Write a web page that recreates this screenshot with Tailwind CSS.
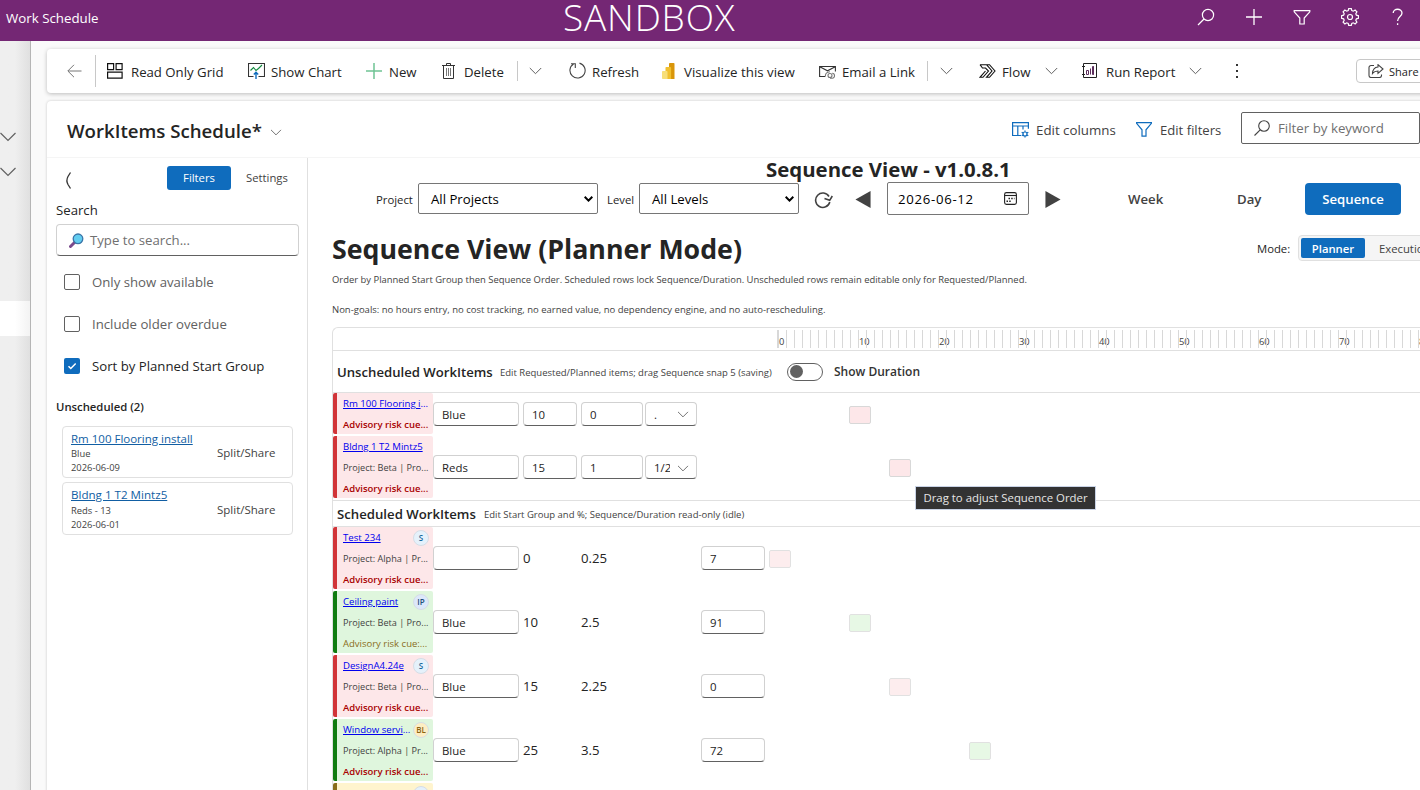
<!DOCTYPE html>
<html lang="en">
<head>
    <meta charset="UTF-8">
    <meta name="viewport" content="width=device-width, initial-scale=1.0">
    <title>Work Schedule</title>
    <script src="https://cdn.jsdelivr.net/npm/@tailwindcss/browser@4"></script>
</head>
<body class="w-[1420px] h-[790px] overflow-hidden bg-[#fafafa] font-['Open_Sans','Noto_Sans',sans-serif] text-[13.2px] text-[#242424] whitespace-nowrap">
    <!-- top bar -->
    <header class="h-[41px] bg-[#742774] text-white grid grid-cols-[563px_1fr_auto]">
        <div class="pl-[6px] pt-[8px] leading-5 text-[13.3px]">Work Schedule</div>
        <div class="text-[37px] leading-[34px] font-light tracking-[0.85px]">SANDBOX</div>
        <div class="flex gap-7 pt-[7px] pr-[12px]">
            <svg class="size-5" viewBox="0 0 20 20" fill="none" stroke="currentColor" stroke-width="1.2"><circle cx="12" cy="8" r="5.6"/><path d="M8 12l-6 6"/></svg>
            <svg class="size-5" viewBox="0 0 20 20" fill="none" stroke="currentColor" stroke-width="1.3"><path d="M10 2v16M2 10h16"/></svg>
            <svg class="size-5" viewBox="0 0 20 20" fill="none" stroke="currentColor" stroke-width="1.2"><path d="M2.2 3.6h15.6v1.2l-5.6 6.2v6H7.8v-6L2.2 4.8z"/></svg>
            <svg class="size-5" viewBox="0 0 20 20" fill="none" stroke="currentColor" stroke-width="1.2"><path d="M8.7 2.3h2.6l.5 2 1.5.6 1.8-1.1 1.8 1.8-1.1 1.8.6 1.5 2 .5v2.6l-2 .5-.6 1.5 1.1 1.8-1.8 1.8-1.8-1.1-1.5.6-.5 2H8.7l-.5-2-1.5-.6-1.8 1.1-1.8-1.8 1.1-1.8-.6-1.5-2-.5V9.4l2-.5.6-1.5-1.1-1.8 1.8-1.8 1.8 1.1 1.5-.6z" transform="translate(0 -.7)"/><circle cx="10" cy="10" r="2.5"/></svg>
            <svg class="size-5" viewBox="0 0 20 20" fill="none" stroke="currentColor" stroke-width="1.3"><path d="M5.2 6c0-5 8.8-5 8.8 0 0 3.5-4.4 3.5-4.4 8M9.6 16.2v1.7"/></svg>
        </div>
    </header>

    <div class="flex h-[749px] overflow-hidden">
        <!-- collapsed navigation -->
        <aside class="w-[31px] shrink-0 border-r border-[#b5b5b5] bg-linear-to-r from-[#efefef] from-50% to-[#e0e0e0] text-[#616161]">
            <svg class="w-[17px] h-[10px] mt-[91px]" viewBox="0 0 17 10" fill="none" stroke="currentColor" stroke-width="1.2"><path d="M.5 1l7.5 7.5L15.5 1"/></svg>
            <svg class="w-[17px] h-[10px] mt-[25px]" viewBox="0 0 17 10" fill="none" stroke="currentColor" stroke-width="1.2"><path d="M.5 1l7.5 7.5L15.5 1"/></svg>
            <div class="mt-[124px] h-[35px] bg-linear-to-r from-white from-50% to-[#f3f3f3]"></div>
        </aside>

        <main class="w-[1389px] h-[749px] pl-4 pt-2 overflow-hidden">
            <!-- command bar -->
            <div class="flex items-center h-[44px] w-[1400px] rounded bg-white shadow-[0_1px_4px_rgba(0,0,0,0.25)]">
                <div class="w-[49px] h-8 border-r border-[#c8c8c8] flex items-center pl-[20px]">
                    <svg class="w-[15px] h-[14px]" viewBox="0 0 15 14" fill="none" stroke="#767676"><path d="M7 .8L.8 7 7 13.2M1 7h13.5"/></svg>
                </div>
                <div class="flex items-center w-[140px] pl-[11px] gap-2">
                    <svg class="size-4" viewBox="0 0 16 16" fill="none" stroke="#111" stroke-width="1.2"><path d="M.6.6h6v6h-6zM9.1.6h6v6h-6zM.6 9.1h14.5v6H.6z"/></svg>
                    <span class="pt-[3px]">Read Only Grid</span>
                </div>
                <div class="flex items-center w-[118px] pl-[12px] gap-[6px]">
                    <svg class="size-[17px]" viewBox="0 0 17 17" fill="none" stroke="#333" stroke-width="1.1"><path d="M5.5 14.5h-5v-13h16v13h-6"/><path stroke="#10893e" d="M2.5 8.5l3-3 2.5 3 2.5-2 3.5-3.5"/><path stroke="#0f6cbd" stroke-width="1.4" d="M8 17v-6.5M5.8 12.5L8 10.3l2.2 2.2"/></svg>
                    <span class="pt-[3px]">Show Chart</span>
                </div>
                <div class="flex items-center w-[76px] pl-[12px] gap-[7px]">
                    <svg class="size-4" viewBox="0 0 16 16" fill="none" stroke="#6fc394" stroke-width="1.5"><path d="M8 0v16M0 8h16"/></svg>
                    <span class="pt-[3px]">New</span>
                </div>
                <div class="flex items-center w-[87px] pl-[12px] gap-[9px]">
                    <svg class="w-[13px] h-4" viewBox="0 0 13 16" fill="none" stroke="#333"><path d="M0 2.5h13M4.500 2.500v-2h4v2M1.500 2.500v13h10v-13"/><path stroke="#777" d="M4.500 5v8M6.500 5v8M8.500 5v8"/></svg>
                    <span class="pt-[3px]">Delete</span>
                </div>
                <div class="w-[40px] h-5 border-l border-[#c8c8c8] flex items-center pl-[11px]">
                    <svg class="w-[13px] h-[8px]" viewBox="0 0 13 8" fill="none" stroke="#616161"><path d="M.8 1l5.7 5.7L12.2 1"/></svg>
                </div>
                <div class="flex items-center w-[93px] pl-[12px] gap-[6px]">
                    <svg class="size-[17px]" viewBox="0 0 17 17" fill="none" stroke="#444" stroke-width="1.1"><path d="M4.5 2A7.6 7.6 0 1 0 10.5 1.1M2 1.8h4.300v4.300"/></svg>
                    <span class="pt-[3px]">Refresh</span>
                </div>
                <div class="flex items-center w-[158px] pl-[12px] gap-[9px]">
                    <svg class="w-[13px] h-4" viewBox="0 0 13 16"><path fill="#d9960a" d="M7 .8A.8.8 0 0 1 7.800 0h3.900a.8.8 0 0 1 .8.800V16H7z"/><path fill="#f0c030" d="M3.500 4.800A.8.8 0 0 1 4.300 4h4a.8.8 0 0 1 .8.800V16H3.500z"/><path fill="#f7df7a" d="M0 8.800A.8.8 0 0 1 .8 8h3.900a.8.8 0 0 1 .8.800V16H.8A.8.8 0 0 1 0 15.200z"/></svg>
                    <span class="pt-[3px] text-[13.3px]">Visualize this view</span>
                </div>
                <div class="flex items-center w-[119px] pl-[11px] gap-[6px]">
                    <svg class="w-[17px] h-[14px] mt-[2px]" viewBox="0 0 17 14" fill="none" stroke="#333" stroke-width="1.1"><path d="M6 11.500H.6v-10h15.800v5M.8 1.800l7.700 4 7.700-4"/><g stroke="#777"><circle cx="11" cy="10.500" r="2"/><path d="M13.200 8.300c3 0 3.200 4.900 0 4.900h-2.200M11 6.700c-4 0-5 3-4.500 5"/></g></svg>
                    <span class="pt-[3px]">Email a Link</span>
                </div>
                <div class="w-[40px] h-5 border-l border-[#c8c8c8] flex items-center pl-[12px]">
                    <svg class="w-[13px] h-[8px]" viewBox="0 0 13 8" fill="none" stroke="#616161"><path d="M.8 1l5.7 5.7L12.2 1"/></svg>
                </div>
                <div class="flex items-center w-[103px] pl-[12px]">
                    <svg class="w-[17px] h-[14px] mr-[6px]" viewBox="0 0 17 14" fill="none" stroke="#111" stroke-width="1.1"><path d="M1 .7h9.500L16 7l-5.500 6.300H7.500L13 7 7.500.7M1 .7L3.500 4h3L9.500 7 4 13.300H1L6.500 7"/></svg>
                    <span class="w-[43px] pt-[3px] text-[13.3px]">Flow</span>
                    <svg class="w-[13px] h-[8px]" viewBox="0 0 13 8" fill="none" stroke="#616161"><path d="M.8 1l5.7 5.7L12.2 1"/></svg>
                </div>
                <div class="flex items-center w-[143px] pl-[12px]">
                    <svg class="w-4 h-4 mr-[8px]" viewBox="0 0 16 16" fill="none" stroke="#222"><path d="M1.500.5h13v14h-13zM0 3.500h3M0 11.500h3"/><path stroke="#5c2d5c" d="M4.500 7.500v4h2v-4zM8.500 5.500v6M11.500 3.500v8M10.500 3.500h1v8h-1z"/></svg>
                    <span class="w-[83px] pt-[3px]">Run Report</span>
                    <svg class="w-[13px] h-[8px]" viewBox="0 0 13 8" fill="none" stroke="#616161"><path d="M.8 1l5.7 5.7L12.2 1"/></svg>
                </div>
                <div class="flex flex-col gap-[4px] pl-[23px] w-[143px]">
                    <i class="size-[2px] bg-[#333]"></i><i class="size-[2px] bg-[#333]"></i><i class="size-[2px] bg-[#333]"></i>
                </div>
                <div class="flex items-center h-6 w-[90px] border border-[#c8c8c8] rounded pl-[11px] gap-[5px] text-[11px]">
                    <svg class="w-4 h-[14px]" viewBox="0 0 16 14" fill="none" stroke="#424242" stroke-width="1.1"><path d="M6 1.500H3A2 2 0 0 0 1 3.500v8a2 2 0 0 0 2 2h8.500a2 2 0 0 0 2-2v-1"/><path d="M10 .7l5 4.300-5 4.300V7C7.500 7 6 7.500 4.500 9.500 4.700 6 6.500 3.200 10 3z"/></svg>
                    <span class="pt-[2px]">Share</span>
                </div>
            </div>

            <!-- page card -->
            <section class="mt-2 w-[1400px] h-[700px] rounded bg-white shadow-[0_0_3px_rgba(0,0,0,0.2)]">
                <div class="flex items-center h-[57px] border-b border-[#f5f5f5]">
                    <div class="flex items-center w-[965px] pl-[20px] gap-[8px] pt-[4px]">
                        <h1 class="text-[18.65px] leading-7 font-semibold">WorkItems Schedule*</h1>
                        <svg class="w-[12px] h-[7px] mt-[2px]" viewBox="0 0 13 8" fill="none" stroke="#616161"><path d="M.8 1l5.7 5.7L12.2 1"/></svg>
                    </div>
                    <div class="flex items-center w-[124px] gap-[7px] text-[#424242] pt-[2px]">
                        <svg class="w-[17px] h-4" viewBox="0 0 17 16" fill="none" stroke="#0f6cbd" stroke-width="1.2"><path d="M9 13.500H.6V.7h15.800v6M.6 4h15.800M5.800 4v9.500M11 4v3.500"/><circle cx="13" cy="12" r="2"/><path d="M13 8.500v1.300M13 14.200v1.300M9.700 10.200l1.300.8M15 13l1.300.8M9.700 13.800l1.300-.8M15 11l1.300-.8"/></svg>
                        <span class="pt-[2px] text-[13.3px]">Edit columns</span>
                    </div>
                    <div class="flex items-center w-[105px] gap-[8px] text-[#424242] pt-[2px]">
                        <svg class="w-4 h-[15px]" viewBox="0 0 16 15" fill="none" stroke="#0f6cbd" stroke-width="1.2"><path d="M.6.6h14.800v.8L10 7.800v6.400H6V7.800L.6 1.400z"/></svg>
                        <span class="pt-[2px] text-[13.1px]">Edit filters</span>
                    </div>
                    <div class="flex items-center w-[179px] h-8 mb-[2px] border border-[#616161] rounded-[2px] pl-[12px] gap-[8px] text-[#707070]">
                        <svg class="size-4" viewBox="0 0 16 16" fill="none" stroke="#424242" stroke-width="1.1"><circle cx="10" cy="6" r="5.300"/><path d="M6.200 9.800L.5 15.500"/></svg>
                        <span class="pt-px text-[13.3px]">Filter by keyword</span>
                    </div>
                </div>

                <div class="flex h-[643px]">
                    <!-- left panel -->
                    <div class="w-[261px] shrink-0 border-r border-[#e0e0e0]">
                        <div class="flex items-center h-[43px] pb-[3px] pl-[18px] text-[11.3px] text-[#424242]">
                            <svg class="w-[7px] h-[17px] mt-[5px] mr-[95px]" viewBox="0 0 7 17" fill="none" stroke="#333" stroke-width="1.3"><path d="M5.500.5L3 4.500Q.8 8.500 3 12.500l2.500 4"/></svg>
                            <div class="w-16 h-6 rounded-[3px] bg-[#0f6cbd] text-white flex items-center justify-center pt-px">Filters</div>
                            <span class="ml-[15px] pt-px">Settings</span>
                        </div>
                        <div class="h-[23px] leading-[18px] pl-[9px]">Search</div>
                        <div class="ml-[9px] w-[243px] h-8 rounded border border-[#d1d1d1] border-b-[#616161] flex items-center pl-[12px] gap-[6px] text-[#707070]">
                            <svg class="size-[15px]" viewBox="0 0 15 15"><path d="M6 9l-4.500 4.500" stroke="#7a4a8c" stroke-width="3" stroke-linecap="round"/><circle cx="9" cy="5.800" r="4.800" fill="#62cdf0" stroke="#3a75a8" stroke-width="1.300"/></svg>
                            <span class="pt-px">Type to search...</span>
                        </div>
                        <div class="flex flex-col gap-[22px] pl-[17px] pt-[16px] text-[#616161]">
                            <div class="flex items-center h-5 gap-[12px]"><i class="size-4 border border-[#616161] rounded-[2px]"></i><span class="pt-px">Only show available</span></div>
                            <div class="flex items-center h-5 gap-[12px]"><i class="size-4 border border-[#616161] rounded-[2px]"></i><span class="pt-px">Include older overdue</span></div>
                            <div class="flex items-center h-5 gap-[12px] text-[#242424]">
                                <svg class="size-4 rounded-[2px] bg-[#0f6cbd]" viewBox="0 0 16 16" fill="none" stroke="#fff" stroke-width="1.5"><path d="M4.500 8.200l2.300 2.300L11.700 5.500"/></svg>
                                <span class="pt-px">Sort by Planned Start Group</span>
                            </div>
                        </div>
                        <div class="mt-[22px] h-[28px] pl-[9px] leading-[18px] text-[11.3px] font-semibold">Unscheduled (2)</div>
                        <div class="ml-[15px] w-[231px] h-[52px] border border-[#e0e0e0] rounded flex items-center">
                            <div class="w-[146px] pl-[8px] text-[9.4px] leading-[14px] text-[#424242]">
                                <a class="block text-[11.5px] leading-[15px] text-[#115ea3] underline">Rm 100 Flooring install</a>
                                <div class="pt-px -mb-px">Blue</div>
                                <div class="pt-px -mb-px">2026-06-09</div>
                            </div>
                            <span class="pl-[8px] pt-[2px] text-[11.5px] text-[#424242]">Split/Share</span>
                        </div>
                        <div class="ml-[15px] mt-[4px] w-[231px] h-[53px] border border-[#e0e0e0] rounded flex items-center">
                            <div class="w-[146px] pl-[8px] text-[9.4px] leading-[14px] text-[#424242]">
                                <a class="block text-[11.6px] leading-[16px] text-[#115ea3] underline">Bldng 1 T2 Mintz5</a>
                                <div class="pt-px -mb-px">Reds - 13</div>
                                <div class="pt-px -mb-px">2026-06-01</div>
                            </div>
                            <span class="pl-[8px] pt-[2px] text-[11.5px] text-[#424242]">Split/Share</span>
                        </div>
                    </div>

                    <!-- sequence view -->
                    <div class="w-[1139px] pl-[24px]">
                        <h2 class="h-[24px] pl-[434px] text-[20.4px] leading-[22px] font-bold">Sequence View - v1.0.8.1</h2>
                        <div class="flex items-center h-[33px] text-[11.3px]">
                            <span class="w-[86px] pl-[44px] pt-[3px]">Project</span>
                            <div class="w-[180px] h-[31px] border border-[#767676] rounded-[2px] flex items-center justify-between pl-[12px] pr-[4px] text-[13.2px] text-black">
                                <span class="pt-[2px]">All Projects</span>
                                <svg class="w-[9px] h-[6px]" viewBox="0 0 9 6" fill="none" stroke="#000" stroke-width="2"><path d="M.7.800l3.800 3.800L8.300.8"/></svg>
                            </div>
                            <span class="w-[41px] pl-[9px] pt-[3px]">Level</span>
                            <div class="w-[160px] h-[31px] border border-[#767676] rounded-[2px] flex items-center justify-between pl-[12px] pr-[4px] text-[13.2px] text-black">
                                <span class="pt-[2px]">All Levels</span>
                                <svg class="w-[9px] h-[6px]" viewBox="0 0 9 6" fill="none" stroke="#000" stroke-width="2"><path d="M.7.800l3.800 3.800L8.300.8"/></svg>
                            </div>
                            <svg class="w-[19px] h-[17px] ml-[15px] mt-[3px]" viewBox="0 0 19 17" fill="none" stroke="#424242" stroke-width="1.6"><path d="M15 4.500A7.200 7.200 0 1 0 15.800 10"/><path d="M18.300 4l-2.600 4.300L10.500 6.500"/></svg>
                            <svg class="w-[16px] h-[17px] ml-[22px] mt-[2px]" viewBox="0 0 16 18" fill="#424242"><path d="M16 0v18L0 9z"/></svg>
                            <div class="ml-[16px] w-[142px] h-[33px] border border-[#767676] rounded-[2px] flex items-center justify-between pl-[10px] pr-[11px] text-[13.2px] text-black">
                                <span class="pt-[2px] tracking-[0.7px]">2026-06-12</span>
                                <svg class="w-[13px] h-[13px]" viewBox="0 0 13 13" fill="none" stroke="#222" stroke-width="1.1"><rect x=".6" y=".6" width="11.800" height="11.800" rx="1.800"/><path d="M.6 3.500h11.800"/><path stroke-dasharray="1.500 1.200" stroke-width="1.500" d="M4.500 6.500h6M2.500 9.300h5"/></svg>
                            </div>
                            <svg class="w-[16px] h-[17px] ml-[16px] mt-[2px]" viewBox="0 0 16 18" fill="#424242"><path d="M0 0v18l16-9z"/></svg>
                            <div class="flex items-center text-[13.2px] font-semibold text-[#424242]">
                                <span class="w-[110px] pl-[67px] pt-[2px]">Week</span>
                                <span class="w-[134px] pl-[66px] pt-[2px]">Day</span>
                                <span class="w-[96px] h-8 rounded bg-[#0f6cbd] text-white flex items-center justify-center pt-[2px]">Sequence</span>
                            </div>
                        </div>

                        <div class="flex items-center h-[59px] pt-[6px]">
                            <h2 class="w-[925px] shrink-0 pt-[2px] text-[26.75px] leading-9 font-bold">Sequence View (Planner Mode)</h2>
                            <span class="w-[41px] shrink-0 pt-[3px] text-[11.3px]">Mode:</span>
                            <div class="flex items-center w-[160px] shrink-0 h-[26px] mt-px rounded border border-[#e0e0e0] bg-[#f5f5f5] p-[2px] text-[11.3px] text-[#424242]">
                                <span class="w-16 h-5 rounded-[2px] bg-[#0f6cbd] text-white font-semibold flex items-center justify-center pt-[2px]">Planner</span>
                                <span class="pl-[14px] pt-[2px]">Execution</span>
                            </div>
                        </div>
                        <p class="h-[30px] text-[9.44px] leading-[12px] text-[#424242]">Order by Planned Start Group then Sequence Order. Scheduled rows lock Sequence/Duration. Unscheduled rows remain editable only for Requested/Planned.</p>
                        <p class="h-[23px] text-[9.51px] leading-[12px] text-[#424242]">Non-goals: no hours entry, no cost tracking, no earned value, no dependency engine, and no auto-rescheduling.</p>

                        <div class="h-[480px] border-l border-t border-[#e0e0e0] rounded-tl-md">
                            <div class="h-[23px] border-b border-[#e0e0e0] pl-[444px] flex items-center text-[9.4px] text-[#424242]">
                                <div id="ruler" class="flex h-[18px] border-l border-[#d8d8d8]"></div>
                            </div>
                            <div class="h-[42px] border-b border-[#e0e0e0] pl-[4px] flex items-center">
                                <h3 class="w-[163px] pt-[2px] text-[13.15px] font-semibold">Unscheduled WorkItems</h3>
                                <span class="w-[287px] pt-[3px] text-[9.5px] text-[#424242]">Edit Requested/Planned items; drag Sequence snap 5 (saving)</span>
                                <div class="w-[36px] h-[18px] rounded-full border border-[#616161] flex items-center pl-[2px]"><i class="size-[13px] rounded-full bg-[#616161]"></i></div>
                                <span class="ml-[11px] pt-px text-[12px] font-semibold text-[#333]">Show Duration</span>
                            </div>
                            <div id="unscheduled" class="relative">
                                <!-- drag hint over the Bldng 1 T2 row -->
                                <div class="absolute left-[582px] top-[93px] z-10 w-[181px] h-[24px] bg-[#333] border border-[#c9d3e6] text-[#e6e6e6] text-[11.4px] leading-[22px] text-center">Drag to adjust Sequence Order</div>
                            </div>
                            <div class="h-[27px] border-t border-b border-[#e0e0e0] pl-[4px] flex items-center">
                                <h3 class="w-[147px] pt-[2px] text-[13.2px] font-semibold">Scheduled WorkItems</h3>
                                <span class="pt-[3px] text-[9.5px] text-[#424242]">Edit Start Group and %; Sequence/Duration read-only (idle)</span>
                            </div>
                            <div id="scheduled"></div>
                        </div>
                    </div>
                </div>
            </section>
        </main>
    </div>

    <script>
        const tones = {
            red: { card: 'bg-[#fde7e9] border-[#d13438]', bar: 'bg-[#fde7e9]' },
            green: { card: 'bg-[#dff6dd] border-[#107c10]', bar: 'bg-[#dff6dd]' },
            yellow: { card: 'bg-[#fff4ce] border-[#8a6d1b]', bar: 'bg-[#fff4ce]' }
        };
        const badges = {
            S: 'bg-[#e5f1fb] text-[#1b6a9c]',
            IP: 'bg-[#dce8fa] text-[#1f4e79]',
            BL: 'bg-[#fdeec2] text-[#8a6414]',
            ' ': 'bg-[#e5f1fb]'
        };
        const unscheduled = [
            { name: 'Rm 100 Flooring i...', tone: 'red', risk: 'Advisory risk cue...', high: true, group: 'Blue', seq: '10', dur: '0', frac: '.' },
            { name: 'Bldng 1 T2 Mintz5', tone: 'red', project: 'Project: Beta | Pro...', risk: 'Advisory risk cue...', high: true, group: 'Reds', seq: '15', dur: '1', frac: '1/2' }
        ];
        const scheduled = [
            { name: 'Test 234', badge: 'S', tone: 'red', project: 'Project: Alpha | Pr...', risk: 'Advisory risk cue...', high: true, group: '', seq: '0', dur: '0.25', pct: '7' },
            { name: 'Ceiling paint', badge: 'IP', tone: 'green', project: 'Project: Beta | Pro...', risk: 'Advisory risk cue:...', high: false, group: 'Blue', seq: '10', dur: '2.5', pct: '91' },
            { name: 'DesignA4.24e', badge: 'S', tone: 'red', project: 'Project: Beta | Pro...', risk: 'Advisory risk cue...', high: true, group: 'Blue', seq: '15', dur: '2.25', pct: '0' },
            { name: 'Window servi...', badge: 'BL', tone: 'green', project: 'Project: Alpha | Pr...', risk: 'Advisory risk cue...', high: true, group: 'Blue', seq: '25', dur: '3.5', pct: '72' }
        ];

        // name cell, the link underline stops before the ellipsis
        function card(r) {
            const cut = r.name.endsWith('...');
            const text = cut ? r.name.slice(0, -3) : r.name;
            return `<div class="w-[100px] shrink-0 border-l-4 rounded-[2px] pl-[6px] text-[9.15px] leading-[21px] text-[#424242] ${tones[r.tone].card}">
                <div class="flex items-center justify-between h-[21px] pr-[4px]">
                    <span class="text-[9.6px] text-[#0000ee]"><a class="underline">${text}</a>${cut ? '...' : ''}</span>
                    ${r.badge ? `<i class="size-4 shrink-0 rounded-full border border-[#d6dde6] not-italic font-semibold text-[8px] leading-[14px] text-center ${badges[r.badge]}">${r.badge}</i>` : ''}
                </div>
                ${r.project === undefined ? '' : `<div class="h-[21px]">${r.project}</div>`}
                <div class="h-[20px] text-[9.5px] ${r.high ? 'font-semibold text-[#a80000]' : 'text-[#8a6d1b]'}">${r.risk}</div>
            </div>`;
        }
        const box = 'h-6 border border-[#d1d1d1] border-b-[#616161] rounded flex items-center text-[11.4px] pl-[8px] pt-[2px] overflow-hidden';

        function row(r) {
            const small = r.project === undefined;
            const fields = r.frac !== undefined
                ? `<div class="w-[54px] ${box}">${r.seq}</div>
                   <div class="w-[62px] ml-[4px] ${box}">${r.dur}</div>
                   <div class="w-[52px] ml-[2px] ${box}"><span class="w-[16px] overflow-hidden">${r.frac}</span><svg class="w-[12px] h-[7px] ml-[7px]" viewBox="0 0 13 8" fill="none" stroke="#616161"><path d="M.8 1l5.7 5.7L12.2 1"/></svg></div>
                   <div class="w-[72px]"></div>`
                : `<div class="w-[58px] pt-px text-[13.2px]">${r.seq}</div>
                   <div class="w-[120px] pt-px text-[13.2px]">${r.dur}</div>
                   <div class="w-[64px] ${box}">${r.pct}</div>
                   <div class="w-[4px]"></div>`;
            return `<div class="flex ${small ? 'h-[43px] pb-[2px]' : 'h-[64px] pb-[2px]'}">
                ${card(r)}
                <div class="flex items-center">
                    <div class="w-[86px] mr-[4px] ${box}">${r.group}</div>
                    ${fields}
                    <i class="w-[22px] h-[18px] mt-[2px] rounded-[2px] border border-[#d8d8d8] ${r.frac ? '' : 'opacity-75'} ${tones[r.tone].bar}" style="margin-left:${r.seq * 8}px"></i>
                </div>
            </div>`;
        }
        document.getElementById('unscheduled').insertAdjacentHTML('beforeend', unscheduled.map(row).join(''));
        // the list ends with the top of a row that is scrolled out
        document.getElementById('scheduled').innerHTML = scheduled.map(row).join('') +
            card({ name: '', badge: ' ', tone: 'yellow', risk: '' });

        // one tick per unit, a label on every tenth
        let ticks = '';
        for (let i = 0; i <= 80; i++) {
            ticks += `<div class="w-[8px] shrink-0 border-l border-[#d8d8d8] leading-[23px]">${i % 10 ? '' : i}</div>`;
        }
        document.getElementById('ruler').innerHTML = ticks;
    </script>
</body>
</html>
